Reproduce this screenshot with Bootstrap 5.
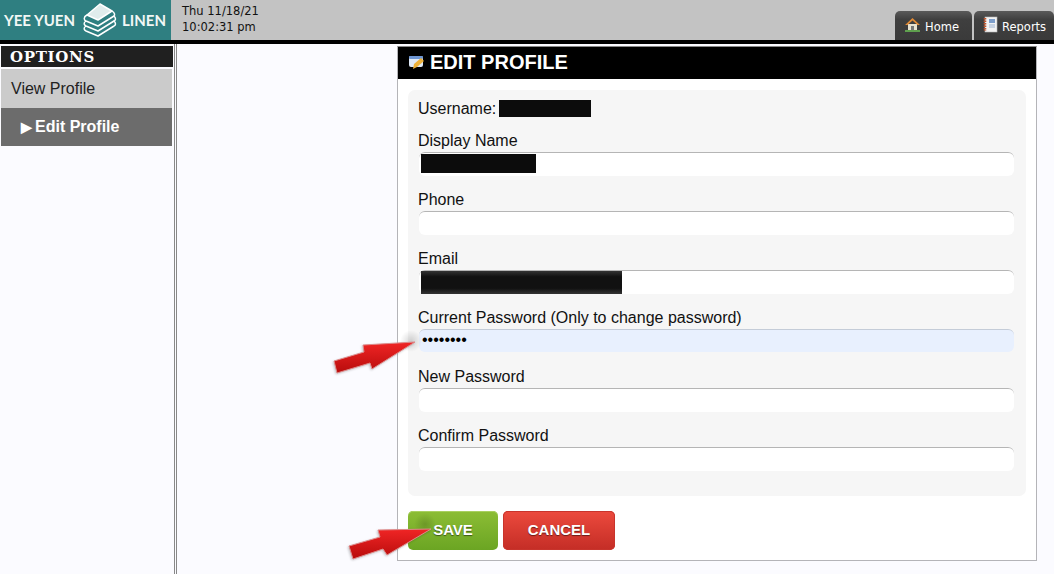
<!DOCTYPE html>
<html lang="en">
<head>
<meta charset="UTF-8">
<title>Edit Profile</title>
<link rel="stylesheet" href="https://cdn.jsdelivr.net/npm/bootstrap@5.3.0/dist/css/bootstrap.min.css">
<style>
html, body { height: 100%; overflow: hidden; }
body { background: #fbfbff; font-family: "Liberation Sans", Arial, sans-serif; color: #111; position: relative; }
.top-bar { height: 44px; background: #c3c3c3; border-bottom: 4px solid #000; }
.logo-box { width: 171px; flex: none; background: #2f7f81; color: #f2f7f5; font-family: "Lato", sans-serif; font-weight: 700; font-size: 15px; padding-left: 4px; white-space: nowrap; }
.logo-icon { margin: 0 5px 0 6px; flex: none; }
.clock { font-family: "DejaVu Sans", sans-serif; font-size: 11.5px; line-height: 16px; padding: 3px 0 0 11px; color: #111; }
.tab-link { height: 29px; background: linear-gradient(#5a5a5a, #3f3f3f 30%, #3a3a3a); color: #fff; border-radius: 5px 5px 0 0; font-family: "DejaVu Sans", sans-serif; font-size: 11.5px; text-decoration: none; gap: 4px; padding: 0 0 0 9px; }
.tab-link span { padding-top: 5px; }
.tab-link svg { margin-top: -3px; }
.tab-home { width: 77px; margin-right: 2px; }
.tab-reports { width: 80px; }
.page-row { height: 530px; }
.side-col { width: 177px; border-right: 3px double #888; padding: 2px 0 0 1px; flex: none; }
.side-title { background: #202020; color: #fff; font-family: "DejaVu Serif", serif; font-weight: 700; font-size: 15px; height: 21px; line-height: 22px; width: 172px; padding-left: 9px; letter-spacing: .7px; margin-bottom: 2px; }
.side-item { display: block; width: 171px; height: 39px; line-height: 40px; background: #cbcbcb; color: #222; font-size: 16px; padding-left: 10px; text-decoration: none; }
.side-item.is-active { height: 38px; line-height: 38px; background: #6c6c6c; color: #fff; font-weight: 700; padding-left: 20px; }
.side-arrow { font-size: 14px; letter-spacing: 3px; }
.main-col { padding: 2px 0 0 220px; }
.profile-panel { width: 640px; height: 515px; background: #fff; border: 1px solid #b4b4b8; border-top-color: #888; }
.panel-head { background: #000; color: #fff; height: 32px; font-weight: 700; font-size: 20px; line-height: 30px; padding: 0 0 2px 10px; gap: 5px; }
.form-area { background: #f6f6f6; border-radius: 7px; margin: 11px 10px 0; height: 406px; padding: 8px 10px; font-size: 16px; }
.user-line { height: 21px; line-height: 21px; margin-bottom: 12px; gap: 3px; }
.hide-bar { background: #0c0c0c; display: inline-block; width: 92px; height: 17px; }
.field-block { height: 59px; }
.field-block label { display: block; line-height: 19px; height: 19px; margin: 0; }
.field-box { height: 24px; margin: 2px 0 0 1px; background: #fff; border: 0; border-top: 1px solid #b5b5b5; border-radius: 6px; width: 595px; position: relative; display: block; padding: 0 3px; outline: 0; }
.field-box.is-filled { background: #e8f0fe; border-top-color: #c4ccd8; font-family: "Liberation Sans", sans-serif; font-size: 16px; color: #000; padding-bottom: 3px; height: 23px; }
.field-mask { position: absolute; left: 2px; top: 1px; height: 19px; width: 115px; background: #0c0c0c; }
.field-mask.is-wide { width: 201px; height: 23px; top: 0; background: linear-gradient(#333, #111 25%, #111 75%, #333); }
.btn-row { gap: 5px; padding: 15px 0 0 10px; }
.act-btn { height: 39px; color: #fff; font-weight: 700; font-size: 15px; border-radius: 5px; border: 0; text-shadow: 0 1px 1px rgba(0,0,0,.5); padding: 0; }
.act-save { width: 90px; background: linear-gradient(#8cbd35, #6ba523); box-shadow: inset 0 1px 0 #a9d060; }
.act-cancel { width: 112px; background: linear-gradient(#ec4a3d, #c42d26); box-shadow: inset 0 0 0 1px #c8342c; }
.tip-shade { position: absolute; width: 22px; height: 22px; border-radius: 50%; background: radial-gradient(rgba(0,0,0,.16), rgba(0,0,0,0) 70%); }
.shade-one { left: 400px; top: 330px; }
.shade-two { left: 414px; top: 513px; }
.hint-arrow { position: absolute; filter: drop-shadow(-1px 1px 1px rgba(0,0,0,.2)); }
.arrow-one { left: 333px; top: 340px; }
.arrow-two { left: 348px; top: 527px; }
</style>
</head>
<body>
<header class="top-bar d-flex">
  <div class="logo-box d-flex align-items-center">
    <span>YEE YUEN</span>
    <svg class="logo-icon" width="36" height="34" viewBox="0 0 36 34" fill="none" stroke="#fff" stroke-width="1.5" stroke-linejoin="round">
      <path d="M6 12 L19 1 L31 8 L17 17 Z" fill="#fff" fill-opacity=".85"/>
      <path d="M6 12 C2 14 3 17 5 18 L17 23 L33 13"/>
      <path d="M5 18 C2 20 3 22 5 23 L17 28 L33 18"/>
      <path d="M5 23 C2 25 3 27 5 28 L17 33 L33 23"/>
      <path d="M31 8 C34 10 34 12 33 13 C35 15 35 17 33 18 C35 20 35 22 33 23"/>
    </svg>
    <span>LINEN</span>
  </div>
  <div class="clock">Thu 11/18/21<br>10:02:31 pm</div>
  <nav class="d-flex align-items-end ms-auto">
    <a class="tab-link tab-home d-flex align-items-center" href="#">
      <svg width="17" height="15" viewBox="0 0 17 15">
        <path d="M1 14 H16" stroke="#5fa04e" stroke-width="2"/>
        <path d="M4 7 H13 V13 H4 Z" fill="#e8e2d0"/>
        <path d="M7 9 H10 V13 H7 Z" fill="#777"/>
        <path d="M1 8 L8.500 1 L16 8 L13.500 8 L8.500 3.500 L3.500 8 Z" fill="#e08a35"/>
      </svg>
      <span>Home</span>
    </a>
    <a class="tab-link tab-reports d-flex align-items-center" href="#">
      <svg width="15" height="17" viewBox="0 0 15 17">
        <rect x="2" y="1" width="12" height="15" fill="#f3f3f3" stroke="#b9b9b9" stroke-width=".6"/>
        <path d="M2 2 V15" stroke="#c2552d" stroke-width="2.600" stroke-dasharray="1.500 1"/>
        <rect x="6" y="3" width="6" height="4" fill="#7e9fcb"/>
        <path d="M6 9 H12 M6 11 H12" stroke="#9db4d3"/>
      </svg>
      <span>Reports</span>
    </a>
  </nav>
</header>

<div class="page-row d-flex">
  <aside class="side-col">
    <div class="side-title">OPTIONS</div>
    <a class="side-item" href="#">View Profile</a>
    <a class="side-item is-active" href="#"><span class="side-arrow">&#9654;</span>Edit Profile</a>
  </aside>
  <main class="main-col">
    <div class="profile-panel">
      <div class="panel-head d-flex align-items-center">
        <svg width="17" height="16" viewBox="0 0 17 16">
          <rect x="1" y="2" width="14" height="11" rx="2" fill="#dfe9f7"/>
          <rect x="1" y="2" width="14" height="3" rx="1" fill="#6d95d2"/>
          <path d="M5 15 L6 10 L13 4 L16 7 L9 13 Z" fill="#edb13a"/>
        </svg>
        <span>EDIT PROFILE</span>
      </div>
      <form class="form-area">
        <div class="user-line d-flex align-items-center">Username: <span class="hide-bar"></span></div>
        <div class="field-block">
          <label>Display Name</label>
          <div class="field-box"><span class="field-mask"></span></div>
        </div>
        <div class="field-block">
          <label>Phone</label>
          <input class="field-box" type="text">
        </div>
        <div class="field-block">
          <label>Email</label>
          <div class="field-box"><span class="field-mask is-wide"></span></div>
        </div>
        <div class="field-block">
          <label>Current Password (Only to change password)</label>
          <input class="field-box is-filled" type="password" value="password">
        </div>
        <div class="field-block">
          <label>New Password</label>
          <input class="field-box" type="password">
        </div>
        <div class="field-block">
          <label>Confirm Password</label>
          <input class="field-box" type="password">
        </div>
      </form>
      <div class="btn-row d-flex">
        <button type="button" class="act-btn act-save">SAVE</button>
        <button type="button" class="act-btn act-cancel">CANCEL</button>
      </div>
    </div>
  </main>
</div>

<span class="tip-shade shade-one"></span>
<span class="tip-shade shade-two"></span>
<svg class="hint-arrow arrow-one" width="84" height="36" viewBox="0 0 84 36">
  <defs><linearGradient id="redGrad" x1="0" y1="0" x2="0" y2="1"><stop offset="0" stop-color="#f02525"/><stop offset="1" stop-color="#b80c0c"/></linearGradient></defs>
  <path d="M1 21 L31 12 L30 5 L82 2 L39 29 L37 23 L4 33 Z" fill="url(#redGrad)" stroke="#dc8a8a" stroke-width="1"/>
</svg>
<svg class="hint-arrow arrow-two" width="84" height="34" viewBox="0 0 84 34">
  <path d="M1 19 L32 10 L30 3 L83 2 L39 28 L35 22 L5 32 Z" fill="url(#redGrad)" stroke="#dc8a8a" stroke-width="1"/>
</svg>
<script src="https://cdn.jsdelivr.net/npm/bootstrap@5.3.0/dist/js/bootstrap.bundle.min.js"></script>
</body>
</html>
